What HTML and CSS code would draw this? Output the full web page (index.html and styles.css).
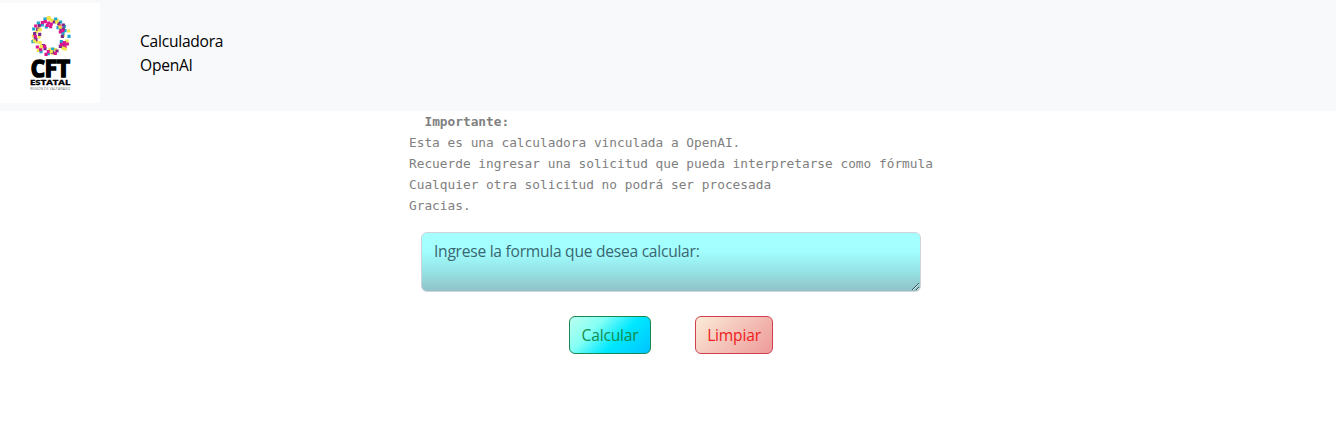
FILE: index.html
```html
<!DOCTYPE html>
<html lang="es">
<head>
<meta charset="utf-8">
<title>Calculadora OpenAI</title>
<link rel="stylesheet" href="styles.css">
</head>
<body>
<header class="navbar">
  <svg class="logo" viewBox="0 9 300 300" role="img" aria-label="CFT Estatal">
    <rect y="9" width="300" height="300" fill="#fff"/>
    <g class="confetti">
      <path stroke="#f1e34b" d="M143 55h0M150 58h0M157 61h0M172 61h0M114 85h0M121 89h0M109 96h0M100 108h0M117 111h0M100 122h0M110 126h0M120 128h0M115 151h0M122 144h0M127 137h0M150 148h0M157 152h0M152 158h0M161 160h0M166 149h0M188 143h0M196 147h0M186 132h0M201 123h0M206 93h0M182 84h0M177 76h0M190 106h0"/>
      <path stroke="#1fa5cf" d="M135 57h0M167 57h0M115 69h0M127 75h0M139 81h0M101 87h0M99 125h0M106 116h0M123 155h0M145 161h0M158 147h0M184 125h0M189 100h0M195 92h0M207 109h0M182 66h0M193 79h0M174 83h0"/>
      <path stroke="#7b2a89" d="M163 66h0M118 77h0M113 88h0M104 101h0M119 103h0M108 119h0M130 137h0M135 146h0M157 157h0M171 153h0M181 139h0M192 135h0M187 109h0M183 91h0M190 87h0M176 71h0M190 75h0"/>
      <path stroke="#dc168d" d="M136 65h0M146 69h0M154 72h0M142 76h0M152 80h0M127 68h0M107 78h0M106 110h0M112 141h0M122 149h0M134 139h0M138 163h0M145 155h0M166 160h0M193 128h0M202 132h0M195 139h0M184 133h0M181 96h0M188 92h0M180 78h0"/>
      <path stroke="#f1e34b" d="M147 53h0M170 66h0M117 90h0M103 123h0M124 140h0M154 155h0M192 145h0M180 81h0"/>
    </g>
    <text class="logo-name" x="92" y="232" textLength="118" lengthAdjust="spacingAndGlyphs">CFT</text>
    <text class="logo-type" x="90" y="255" textLength="121" lengthAdjust="spacingAndGlyphs">ESTATAL</text>
    <text class="logo-region" x="90" y="269" textLength="121" lengthAdjust="spacingAndGlyphs">REGIÓN DE VALPARAÍSO</text>
  </svg>
  <div class="brand">Calculadora<br>OpenAI</div>
</header>
<main class="content">
<pre class="notice">  <b>Importante:</b>
Esta es una calculadora vinculada a OpenAI.
Recuerde ingresar una solicitud que pueda interpretarse como fórmula
Cualquier otra solicitud no podrá ser procesada
Gracias.</pre>
  <textarea class="formula" placeholder="Ingrese la formula que desea calcular:"></textarea>
  <div class="actions">
    <button class="btn btn-calc">Calcular</button>
    <button class="btn btn-clear">Limpiar</button>
  </div>
</main>
</body>
</html>
```
FILE: styles.css
```css
* { box-sizing: border-box; }
body {
  margin: 0;
  background: #fff;
  font: 15.6px/24px "Open Sans", sans-serif;
  letter-spacing: -0.25px;
  color: #000;
}
.navbar {
  display: flex;
  align-items: flex-start;
  gap: 40px;
  height: 111px;
  padding-top: 3px;
  background: #f8f9fa;
}
.logo { width: 100px; height: 100px; letter-spacing: 0; }
.confetti path { stroke-width: 9.5; stroke-linecap: square; }
.logo-name { font: 700 70px "Open Sans", sans-serif; stroke: #000; stroke-width: 5; }
.logo-type { font: 700 22px "Open Sans", sans-serif; stroke: #000; stroke-width: 1; }
.logo-region { font: 10px "Open Sans", sans-serif; fill: #777; }
.brand { padding-top: 26px; }
.content {
  display: flex;
  flex-direction: column;
  align-items: center;
}
.notice {
  width: 524px;
  margin: 0 0 16px 6px;
  font: 12.8px/21px "DejaVu Sans Mono", monospace;
  letter-spacing: 0;
  color: #808080;
}
.formula {
  width: 500px;
  height: 60px;
  margin-left: 6px;
  padding: 6px 12px;
  border: 1px solid #ced4da;
  border-radius: 6px;
  background: linear-gradient(#a5ffff 0%, #a3ffff 30%, #97e8ea 60%, #90c3c8 100%);
  font: inherit;
  letter-spacing: -0.26px;
  resize: both;
}
.formula::placeholder { color: #3a6670; opacity: 1; }
.actions {
  display: flex;
  gap: 44px;
  margin: 24px 0 0 6px;
}
.btn {
  height: 38px;
  padding: 0;
  border: 1px solid;
  border-radius: 6px;
  font: inherit;
  letter-spacing: -0.2px;
}
.btn-calc {
  width: 82px;
  border-color: #198754;
  background: linear-gradient(135deg, #baffef 0%, #86fff4 30%, #00e8ff 60%, #00c4ff 100%);
  color: #158c4b;
}
.btn-clear {
  width: 78px;
  border-color: #cf3f50;
  background: linear-gradient(135deg, #faebd7, #ee9a9a);
  color: #ee1c1c;
}
```
